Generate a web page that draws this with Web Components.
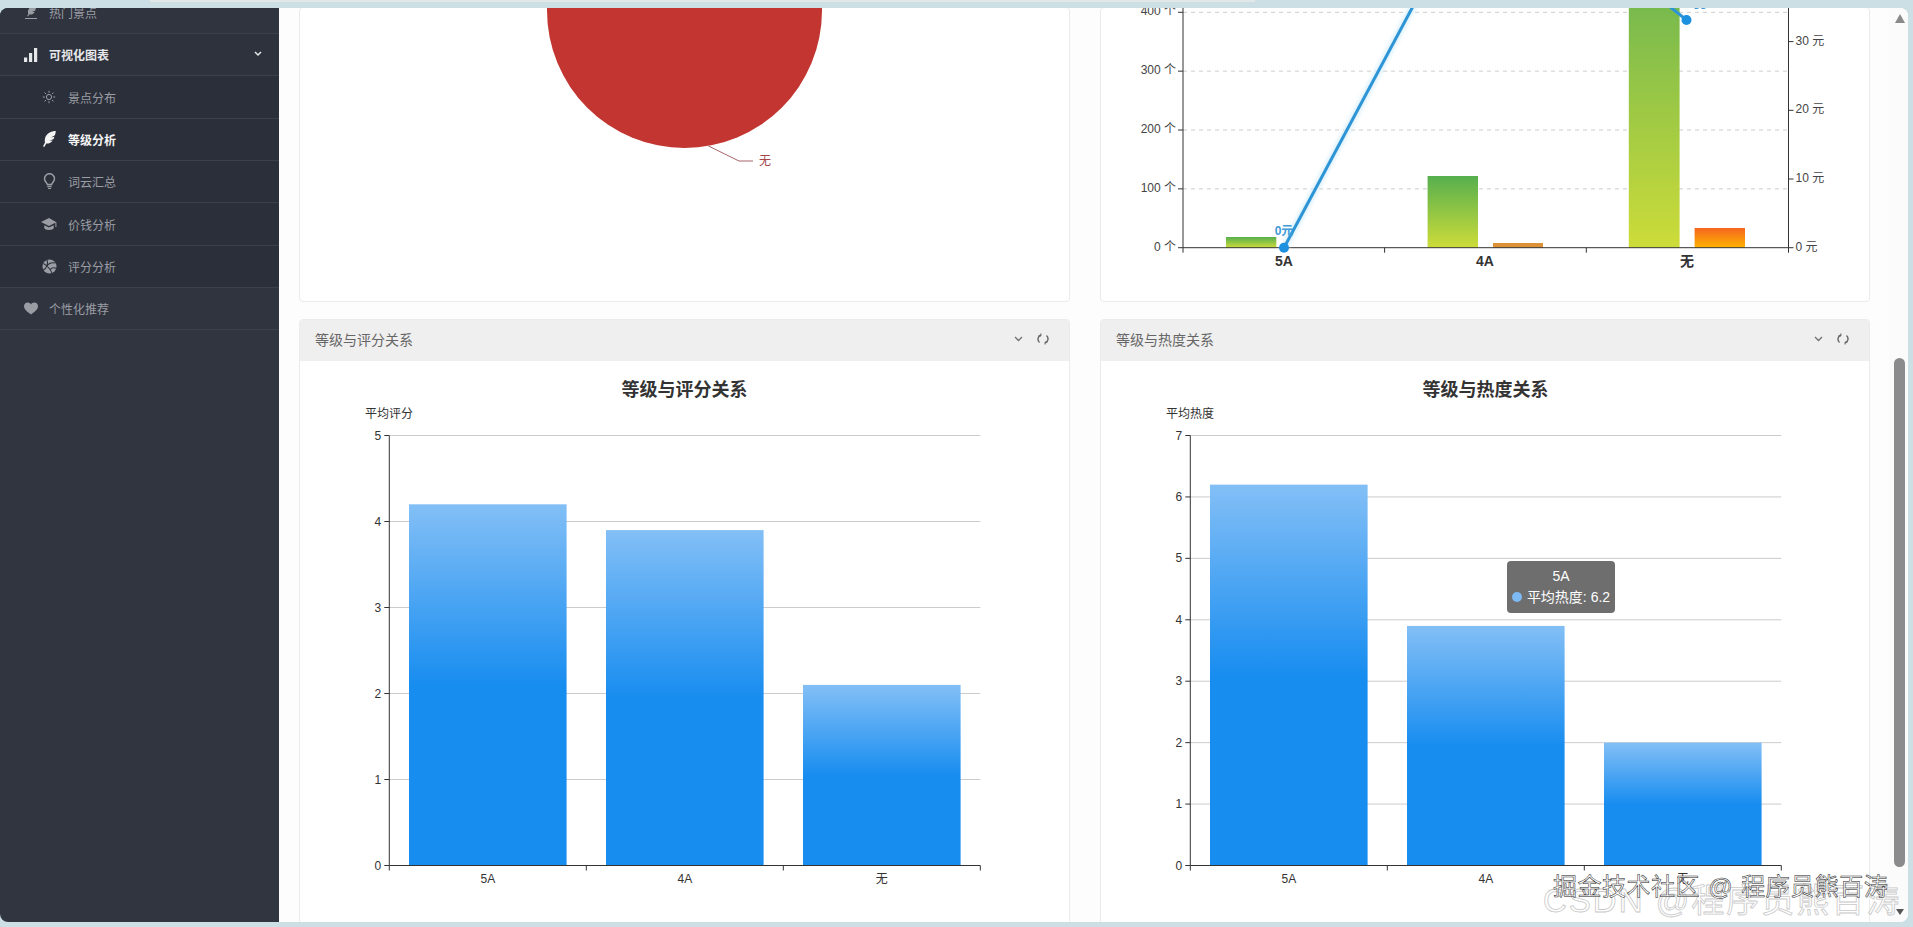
<!DOCTYPE html>
<html lang="zh">
<head>
<meta charset="utf-8">
<title>等级分析</title>
<style>
  html, body { margin: 0; height: 100%; overflow: hidden; }
  body { background: #cbdfe4; font-family: "Liberation Sans", "Noto Sans CJK SC", sans-serif; position: relative; }
</style>
</head>
<body>
<app-shell>
  <side-nav slot="side">
    <nav-row icon="pen" label="热门景点"></nav-row>
    <nav-row icon="signal" label="可视化图表" open></nav-row>
    <nav-row icon="sun" label="景点分布" sub></nav-row>
    <nav-row icon="feather" label="等级分析" sub active></nav-row>
    <nav-row icon="bulb" label="词云汇总" sub></nav-row>
    <nav-row icon="cap" label="价钱分析" sub></nav-row>
    <nav-row icon="ball" label="评分分析" sub></nav-row>
    <nav-row icon="heart" label="个性化推荐"></nav-row>
  </side-nav>
  <panel-card><pie-chart></pie-chart></panel-card>
  <panel-card><combo-chart></combo-chart></panel-card>
  <panel-card heading="等级与评分关系">
    <bar-chart title-text="等级与评分关系" axis-name="平均评分" max="5" values="4.2,3.9,2.1"></bar-chart>
  </panel-card>
  <panel-card heading="等级与热度关系">
    <bar-chart title-text="等级与热度关系" axis-name="平均热度" max="7" values="6.2,3.9,2.0">
      <chart-tip name="5A" series="平均热度" value="6.2"></chart-tip>
    </bar-chart>
  </panel-card>
</app-shell>
<water-mark></water-mark>

<script>
const ICONS = {
  pen: '<path fill="currentColor" d="M12.500 .5C8 1 4.500 3.500 4 7c-.2 1.400 0 2.400.3 3L3.200 12l.9.500 1.200-2c2.400.2 4.600-.8 5.400-2.600L8 8l3.100-1.300c.9-2 1.400-4 1.400-6.200z"/><path stroke="currentColor" stroke-width="1.200" d="M1 14.500h12"/>',
  signal: '<path fill="currentColor" d="M0 9.500h3.200V14H0zM5 5h3.200v9H5zM10 0h3.200v14H10z"/>',
  sun: '<g stroke="currentColor" stroke-width="1" fill="none"><circle cx="7" cy="7" r="2.600"/><path d="M7 .8v2M7 11.200v2M.8 7h2M11.200 7h2M2.600 2.600l1.400 1.400M10 10l1.400 1.400M2.600 11.400L4 10M10 4l1.400-1.400"/></g>',
  feather: '<path fill="currentColor" d="M12.800 0C8.300 0 3.400 2.500 2.200 6.800c-.5 1.800-.5 3.300-.2 4.700L0 15.300l1.300.7 2-3.400c2.800.1 5.300-1 6.400-3.100L6.400 10l4.100-1.900c.5-.8.700-1.500.8-2.300L8 6.400l3.900-2.100c.5-1.400.8-2.900.9-4.300z"/>',
  bulb: '<g stroke="currentColor" stroke-width="1.500" fill="none"><path d="M4.300 11.500C4 9.500 1.500 8.500 1.500 5.700a5 5 0 0 1 10 0C11.500 8.500 9 9.500 8.700 11.500z"/><path d="M4.300 13.600h4.400"/></g><path fill="currentColor" d="M5 15h3v1H5z"/>',
  cap: '<path fill="currentColor" d="M8 1L0 5l8 4 6.400-3.200V10h1V5.300z"/><path fill="currentColor" d="M3.300 8.300V11c0 1.100 2.200 2 4.700 2s4.700-.9 4.700-2V8.300L8 10.600z"/>',
  ball: '<circle cx="7.500" cy="7.500" r="7" fill="currentColor"/><g stroke="#2b2f39" stroke-width="1.100" fill="none"><path d="M1.500 4.500C5 6.500 9 11 10 14.300M5 1C6.200 4 5 9.500 1.200 11M13.600 4c-3.300-.7-7.200.3-9 3.500M14.300 9.300c-2-.8-4.500-.6-6 1"/></g>',
  heart: '<path fill="currentColor" d="M7 12.500C2.500 9.200 0 7 0 4.200 0 2 1.700.5 3.700.5 5.100.5 6.300 1.200 7 2.400 7.700 1.200 8.900.5 10.300.5 12.300.5 14 2 14 4.200c0 2.800-2.500 5-7 8.300z"/>'
};
const ICON_BOX = {
  pen: [14, 16], signal: [14, 14], sun: [14, 14], feather: [13, 16], bulb: [13, 17], cap: [16, 14], ball: [15, 15], heart: [14, 13]
};

class AppShell extends HTMLElement {
  constructor() {
    super();
    this.attachShadow({ mode: 'open' }).innerHTML = `
      <style>
        :host { display: flex; margin: 8px 5px 0 0; height: 914px; border-radius: 8px; overflow: hidden; background: #fdfdfd; }
        ::slotted([slot=side]) { flex: none; }
        .strip { position: fixed; top: 0; left: 150px; width: 1105px; height: 2px; background: #e2e8e8; }
        main { flex: 1; min-width: 0; overflow: hidden; padding: 0 19px 0 20px; }
        .grid { display: grid; grid-template-columns: 771px 770px; grid-template-rows: 295px 640px; column-gap: 30px; row-gap: 17px; margin-top: -1px; }
      </style>
      <div class="strip"></div>
      <slot name="side"></slot>
      <main><div class="grid"><slot></slot></div></main>
      <scroll-rail></scroll-rail>`;
  }
}

class SideNav extends HTMLElement {
  constructor() {
    super();
    this.attachShadow({ mode: 'open' }).innerHTML = `
      <style>
        :host { display: block; width: 279px; height: 100%; background: #30353f; overflow: hidden; }
        .list { margin-top: -16.300px; display: flex; flex-direction: column; }
      </style>
      <div class="list"><slot></slot></div>`;
  }
}

class NavRow extends HTMLElement {
  constructor() {
    super();
    this.attachShadow({ mode: 'open' });
  }

  connectedCallback() {
    const icon = this.getAttribute('icon');
    const sub = this.hasAttribute('sub');
    const open = this.hasAttribute('open');
    const active = this.hasAttribute('active');
    const [w, h] = ICON_BOX[icon];
    const colour = active ? '#f4f4f5' : open ? '#e6e7e9' : '#9a9da4';
    this.shadowRoot.innerHTML = `
      <style>
        :host { display: block; }
        .row {
          box-sizing: border-box; height: 42.350px; display: flex; align-items: center;
          padding-left: ${sub ? 40 : 22}px; border-bottom: 1px solid #3b404b;
          background: ${sub ? '#2b2f39' : open ? '#2e323d' : '#30343f'};
          color: ${colour}; font-size: 12px; font-weight: ${open || active ? 700 : 400};
        }
        .ic { width: 18px; display: flex; justify-content: center; margin-right: ${sub ? 10 : 9}px; }
        .chev { margin-left: auto; margin-right: 17px; margin-top: -1px; }
      </style>
      <div class="row">
        <span class="ic"><svg width="${w}" height="${h}" viewBox="0 0 ${w} ${h}">${ICONS[icon]}</svg></span>
        <span>${this.getAttribute('label')}</span>
        ${open ? '<svg class="chev" width="8" height="6" viewBox="0 0 8 6"><path d="M1 1l3 3 3-3" fill="none" stroke="#e6e7e9" stroke-width="1.500"/></svg>' : ''}
      </div>`;
  }
}

class PanelCard extends HTMLElement {
  constructor() {
    super();
    this.attachShadow({ mode: 'open' });
  }

  connectedCallback() {
    const heading = this.getAttribute('heading');
    this.shadowRoot.innerHTML = `
      <style>
        :host { display: block; box-sizing: border-box; background: #fff; border: 1px solid #e9ebec; border-radius: 4px; overflow: hidden; }
        header { height: 42px; box-sizing: border-box; display: flex; align-items: center; padding: 0 15px 2px; background: #efefef; color: #666; font-size: 14px; margin-top: -1px; }
        .tools { margin-left: auto; display: flex; align-items: center; gap: 14px; margin-right: 5px; }
      </style>
      ${heading ? `<header><span>${heading}</span>
        <span class="tools">
          <svg width="9" height="6" viewBox="0 0 9 6"><path d="M1 1l3.500 3.500L8 1" fill="none" stroke="#707070" stroke-width="1.300"/></svg>
          <svg width="12" height="12" viewBox="0 0 11 11" fill="none" stroke="#666" stroke-width="1.300"><path d="M2.300 8.800A4.300 4.300 0 0 1 3.500 1.700M8.700 2.200A4.300 4.300 0 0 1 7.500 9.300"/><path d="M3.600 .4v2.400H1.400M7.400 10.600V8.200h2.200" stroke-width=".9"/></svg>
        </span></header>` : ''}
      <slot></slot>`;
  }
}

class PieChart extends HTMLElement {
  constructor() {
    super();
    this.attachShadow({ mode: 'open' }).innerHTML = `
      <style>:host { display: block; } svg { display: block; }
        text { font: 12px "Liberation Sans", "Noto Sans CJK SC", sans-serif; }</style>
      <svg width="768" height="293" viewBox="300 8 768 293">
        <circle cx="684.500" cy="10.500" r="137.500" fill="#c23531"/>
        <polyline points="708.500,146 739,161 753,161" fill="none" stroke="#a4656a" stroke-width="1"/>
        <text x="759" y="165" fill="#a5474b">无</text>
      </svg>`;
  }
}

class ComboChart extends HTMLElement {
  constructor() {
    super();
    this.attachShadow({ mode: 'open' });
  }

  connectedCallback() {
    const base = 247.700, left = 1183, right = 1788.500;
    const yL = v => base - v * 0.5885, yR = v => base - v * 6.87;
    let grid = '', axes = '';
    for (const v of [100, 200, 300, 400]) {
      grid += `<line x1="${left}" x2="${right}" y1="${yL(v)}" y2="${yL(v)}" stroke="#ccc" stroke-dasharray="4 4"/>`;
    }
    for (const v of [0, 100, 200, 300, 400]) {
      axes += `<line x1="${left - 5}" x2="${left}" y1="${yL(v)}" y2="${yL(v)}"/>`;
      axes += `<text class="lab" x="${left - 7}" y="${yL(v) + 3}" text-anchor="end">${v} 个</text>`;
    }
    for (const v of [0, 10, 20, 30]) {
      axes += `<line x1="${right}" x2="${right + 5}" y1="${yR(v)}" y2="${yR(v)}"/>`;
      axes += `<text class="lab" x="${right + 7}" y="${yR(v) + 3}">${v} 元</text>`;
    }
    for (const x of [1183, 1384.600, 1586.300, 1788.500]) {
      axes += `<line x1="${x}" x2="${x}" y1="${base}" y2="${base + 5}"/>`;
    }
    const cats = [['5A', 1284], ['4A', 1485], ['无', 1687]];
    const labels = cats.map(([t, x]) => `<text class="cat" x="${x}" y="266" text-anchor="middle">${t}</text>`).join('');
    this.shadowRoot.innerHTML = `
      <style>:host { display: block; } svg { display: block; }
        text { font-family: "Liberation Sans", "Noto Sans CJK SC", sans-serif; }
        .lab { font-size: 12px; fill: #444; }
        .cat { font-size: 14px; font-weight: 700; fill: #333; }
        .axes line { stroke: #333; stroke-width: 1; }
      </style>
      <svg width="767" height="293" viewBox="1101 8 767 293">
        <defs>
          <linearGradient id="g1" x1="0" y1="0" x2="0" y2="1"><stop offset="0" stop-color="#56af4e"/><stop offset="1" stop-color="#cddc39"/></linearGradient>
          <linearGradient id="g2" x1="0" y1="0" x2="0" y2="1"><stop offset="0" stop-color="#6fb650"/><stop offset="1" stop-color="#cddc39"/></linearGradient>
          <linearGradient id="o1" x1="0" y1="0" x2="0" y2="1"><stop offset="0" stop-color="#f4661f"/><stop offset="1" stop-color="#ffb300"/></linearGradient>
          <filter id="glow" x="-20%" y="-20%" width="140%" height="140%"><feGaussianBlur stdDeviation="2"/></filter>
        </defs>
        ${grid}
        <rect x="1226" y="237" width="50.300" height="10.700" fill="url(#g1)"/>
        <rect x="1427.600" y="176" width="50.400" height="71.700" fill="url(#g1)"/>
        <rect x="1628.800" y="-20" width="50.800" height="267.700" fill="url(#g2)"/>
        <rect x="1493" y="243" width="50" height="4.700" fill="#dc9136"/>
        <rect x="1694.600" y="228" width="50.400" height="19.700" fill="url(#o1)"/>
        <g class="axes">
          <line x1="${left}" x2="${left}" y1="0" y2="${base}"/>
          <line x1="${right}" x2="${right}" y1="0" y2="${base}"/>
          <line x1="${left}" x2="${right}" y1="${base}" y2="${base}"/>
          ${axes}
        </g>
        <g fill="none" stroke-width="3">
          <polyline points="1284,247.700 1426,-18" stroke="#d5eefa" stroke-width="6" filter="url(#glow)"/>
          <polyline points="1284,247.700 1426,-18" stroke="#2d95d6"/>
          <polyline points="1664,2 1686.500,20" stroke="#2d95d6"/>
        </g>
        <circle cx="1284" cy="247.700" r="5" fill="#1e90e0"/>
        <circle cx="1686.500" cy="20" r="5" fill="#1e90e0"/>
        <text x="1284" y="235" text-anchor="middle" font-size="12" font-weight="700" fill="#3f9ad6">0元</text>
        <text x="1700" y="9" text-anchor="middle" font-size="12" font-weight="700" fill="#3f9ad6">33</text>
        ${labels}
      </svg>`;
  }
}

class BarChart extends HTMLElement {
  constructor() {
    super();
    this.attachShadow({ mode: 'open' });
  }

  connectedCallback() {
    const max = +this.getAttribute('max');
    const values = this.getAttribute('values').split(',').map(Number);
    const gx = 89.300, gr = 680.300, top = 74.500, bot = 504.500;
    const step = (bot - top) / max, cat = (gr - gx) / 3;
    let lines = '', ticks = '';
    for (let i = 0; i <= max; i++) {
      const y = bot - i * step;
      if (i) lines += `<line x1="${gx}" x2="${gr}" y1="${y}" y2="${y}" stroke="#ccc"/>`;
      ticks += `<line x1="${gx - 5}" x2="${gx}" y1="${y}" y2="${y}"/>`;
      ticks += `<text x="${gx - 8}" y="${y + 4}" text-anchor="end">${i}</text>`;
    }
    for (let i = 0; i <= 3; i++) {
      ticks += `<line x1="${gx + i * cat}" x2="${gx + i * cat}" y1="${bot}" y2="${bot + 5}"/>`;
    }
    const names = ['5A', '4A', '无'];
    const bars = values.map((v, i) => {
      const h = v * step;
      const x = gx + i * cat + cat * 0.1;
      return `<rect x="${x}" y="${bot - h}" width="${cat * 0.8}" height="${h}" fill="url(#bar)"/>
        <text x="${gx + (i + 0.5) * cat}" y="521.500" text-anchor="middle" class="lab">${names[i]}</text>`;
    }).join('');
    this.shadowRoot.innerHTML = `
      <style>
        :host { display: block; position: relative; }
        svg { display: block; }
        text { font-family: "Liberation Sans", "Noto Sans CJK SC", sans-serif; font-size: 12px; fill: #333; }
        .title { font-size: 18px; font-weight: 700; }
        .ax line { stroke: #333; }
      </style>
      <svg width="767" height="600" viewBox="0 0 767 600">
        <defs><linearGradient id="bar" x1="0" y1="0" x2="0" y2="1">
          <stop offset="0" stop-color="#83bff6"/><stop offset=".5" stop-color="#188df0"/><stop offset="1" stop-color="#188df0"/>
        </linearGradient></defs>
        <text class="title" x="384.500" y="34.500" text-anchor="middle">${this.getAttribute('title-text')}</text>
        <text x="65" y="57">${this.getAttribute('axis-name')}</text>
        ${lines}
        ${bars}
        <g class="ax">
          <line x1="${gx}" x2="${gx}" y1="${top}" y2="${bot}"/>
          <line x1="${gx}" x2="${gr}" y1="${bot}" y2="${bot}"/>
          ${ticks}
        </g>
      </svg>
      <slot></slot>`;
  }
}

class ChartTip extends HTMLElement {
  constructor() {
    super();
    this.attachShadow({ mode: 'open' });
  }

  connectedCallback() {
    this.shadowRoot.innerHTML = `
      <style>
        :host { position: absolute; left: 406px; top: 200px; width: 108px; height: 52px; box-sizing: border-box; background: #6e6e6e; border-radius: 4px; color: #fff; font-size: 14px; text-align: center; line-height: 21px; padding-top: 5px; white-space: nowrap; }
        .dot { display: inline-block; width: 10px; height: 10px; border-radius: 50%; background: #7db9f2; margin-right: 5px; }
      </style>
      <div>${this.getAttribute('name')}</div>
      <div><span class="dot"></span>${this.getAttribute('series')}: ${this.getAttribute('value')}</div>`;
  }
}

class ScrollRail extends HTMLElement {
  constructor() {
    super();
    this.attachShadow({ mode: 'open' }).innerHTML = `
      <style>
        :host { flex: none; display: flex; flex-direction: column; align-items: center; box-sizing: border-box; width: 19px; padding: 6px 3px 0 5px; background: #fbfbfb; }
        .up { display: block; }
        .thumb { width: 11px; height: 509px; margin-top: 335px; background: #8b8a8c; border-radius: 6px; flex: none; }
        .down { margin-top: 42px; flex: none; }
      </style>
      <svg class="up" width="10" height="9" viewBox="0 0 10 9"><path d="M5 0l5 9H0z" fill="#8a8a8a"/></svg>
      <div class="thumb"></div>
      <svg class="down" width="8" height="6" viewBox="0 0 8 6"><path d="M0 0h8L4 6z" fill="#555"/></svg>`;
  }
}

class WaterMark extends HTMLElement {
  constructor() {
    super();
    this.attachShadow({ mode: 'open' }).innerHTML = `
      <style>
        :host { position: absolute; left: 1543px; top: 868px; width: 370px; height: 50px; pointer-events: none; white-space: nowrap; }
        span { position: absolute; }
        .back { left: 0; top: 6px; font-size: 33px; letter-spacing: 2px; color: rgba(255,255,255,.4); -webkit-text-stroke: .8px #c9c9c9; }
        .front { left: 10px; top: -1px; font-size: 24px; word-spacing: 1px; letter-spacing: .5px; color: rgba(255,255,255,.85); -webkit-text-stroke: .5px #222; }
      </style>
      <span class="back">CSDN @程序员熊百涛</span>
      <span class="front">掘金技术社区 @ 程序员熊百涛</span>`;
  }
}

customElements.define('app-shell', AppShell);
customElements.define('side-nav', SideNav);
customElements.define('nav-row', NavRow);
customElements.define('panel-card', PanelCard);
customElements.define('pie-chart', PieChart);
customElements.define('combo-chart', ComboChart);
customElements.define('bar-chart', BarChart);
customElements.define('chart-tip', ChartTip);
customElements.define('scroll-rail', ScrollRail);
customElements.define('water-mark', WaterMark);
</script>
</body>
</html>
